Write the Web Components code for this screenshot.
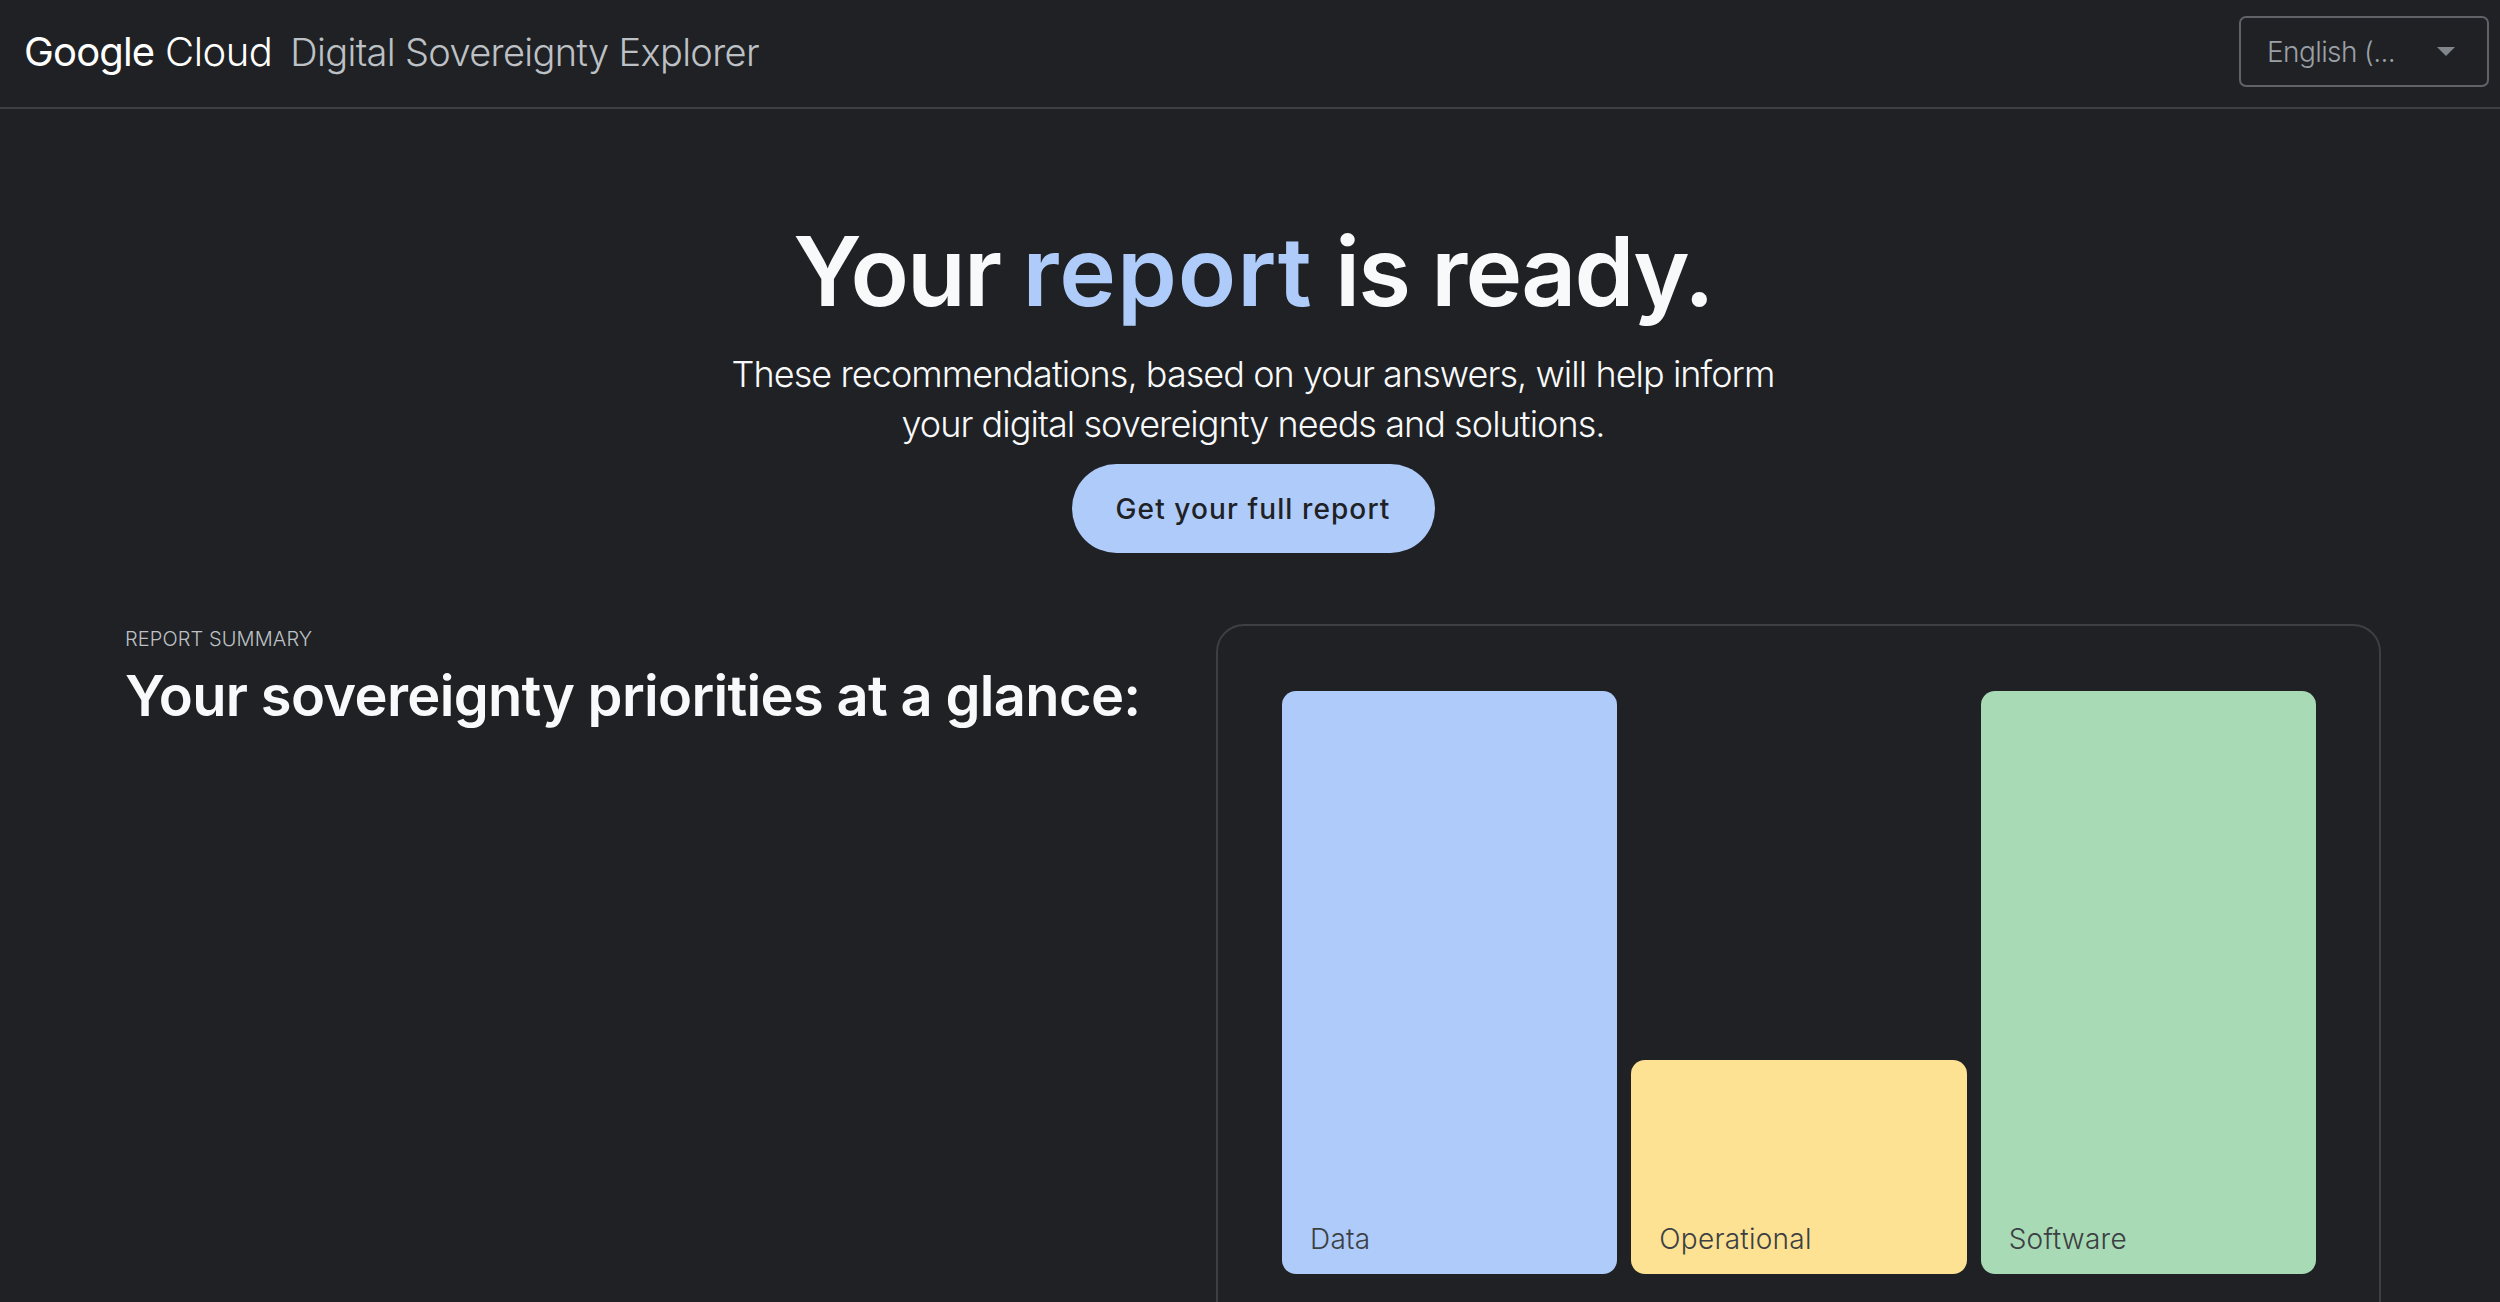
<!DOCTYPE html>
<html lang="en">
<head>
<meta charset="UTF-8">
<title>Digital Sovereignty Explorer</title>
<style>
	html, body { margin: 0; background: #202124; }
	body { font-family: "Inter", "Liberation Sans", sans-serif; color: #f8f9fa; height: 1302px; overflow: hidden; }
</style>
</head>
<body>
<ds-header></ds-header>
<ds-hero>
	<span slot="before">Your </span><span slot="accent">report</span><span slot="after"> is ready.</span>
	<span slot="lead">These recommendations, based on your answers, will help inform<br>your digital sovereignty needs and solutions.</span>
	<ds-button slot="action">Get your full report</ds-button>
</ds-hero>
<ds-summary>
	<span slot="eyebrow">REPORT SUMMARY</span>
	<span slot="title">Your sovereignty priorities at a glance:</span>
	<ds-chart slot="chart">
		<ds-bar style="--level: 100%; --fill: #aecbfa">Data</ds-bar>
		<ds-bar style="--level: 36.7%; --fill: #fde293">Operational</ds-bar>
		<ds-bar style="--level: 100%; --fill: #a8dab5">Software</ds-bar>
	</ds-chart>
</ds-summary>
<script>
	const define = (name, markup) => customElements.define(name, class extends HTMLElement {
		constructor() {
			super();
			this.attachShadow({ mode: "open" }).innerHTML = markup;
		}
	});

	define("ds-select", `<style>
		:host { display: flex; align-items: center; box-sizing: border-box; width: 250px; height: 71px; padding: 0 32px 0 26px; border: 2px solid #5f6368; border-radius: 7px; color: #9aa0a6; font-size: 28px; font-weight: 350; letter-spacing: -.6px; }
		span { flex: 1; }
		svg { display: block; }
	</style><span><slot></slot></span><svg width="18" height="9" viewBox="0 0 18 9"><path d="M0 0h18L9 9z" fill="#80868b"/></svg>`);

	define("ds-header", `<style>
		:host { display: flex; align-items: center; box-sizing: border-box; height: 109px; padding: 0 11px 4px 24px; border-bottom: 2px solid #3c4043; }
		.logo { color: #fff; font-size: 40px; letter-spacing: -.5px; white-space: nowrap; font-weight: 300; }
		.logo b { font-weight: 420; letter-spacing: -.85px; }
		.name { margin-left: 18px; flex: 1; color: #bdc1c6; font-size: 38px; font-weight: 350; letter-spacing: -.66px; white-space: nowrap; }
	</style><span class="logo"><b>Google</b> Cloud</span><span class="name">Digital Sovereignty Explorer</span><ds-select>English (...</ds-select>`);

	define("ds-button", `<style>
		:host { display: inline-flex; align-items: center; justify-content: center; box-sizing: border-box; width: 363px; height: 89px; border-radius: 45px; background: #aecbfa; color: #202124; font-size: 28px; font-weight: 500; letter-spacing: 1.1px; }
	</style><slot></slot>`);

	define("ds-hero", `<style>
		:host { display: flex; flex-direction: column; align-items: center; padding: 106px 0 0 6px; text-align: center; }
		h1 { margin: 0; font-size: 96px; line-height: 112px; font-weight: 600; letter-spacing: -1.9px; color: #f8f9fa; }
		.accent { color: #aecbfa; letter-spacing: .9px; }
		p { margin: 22px 0 0; font-size: 36px; line-height: 50px; font-weight: 350; letter-spacing: -.95px; }
		.action { margin-top: 15px; }
	</style>
	<h1><slot name="before"></slot><span class="accent"><slot name="accent"></slot></span><slot name="after"></slot></h1>
	<p><slot name="lead"></slot></p>
	<div class="action"><slot name="action"></slot></div>`);

	define("ds-summary", `<style>
		:host { display: grid; grid-template-columns: 1092px 1164px; margin-top: 71px; padding-left: 125px; }
		.eyebrow { margin-top: 3px; font-size: 20px; line-height: 24px; font-weight: 350; letter-spacing: .1px; color: #bdc1c6; }
		h2 { margin: 11px 0 0; font-size: 56px; line-height: 68px; font-weight: 600; letter-spacing: -.67px; white-space: nowrap; }
	</style>
	<div>
		<div class="eyebrow"><slot name="eyebrow"></slot></div>
		<h2><slot name="title"></slot></h2>
	</div>
	<slot name="chart"></slot>`);

	define("ds-chart", `<style>
		:host { display: flex; align-items: flex-end; gap: 14px; box-sizing: border-box; height: 717px; padding: 65px 63px 65px 64px; border: 2px solid #3c4043; border-radius: 28px; margin-left: -1px; }
	</style><slot></slot>`);

	define("ds-bar", `<style>
		:host { display: flex; align-items: flex-end; box-sizing: border-box; flex: 1; height: var(--level); padding: 0 28px 15px; border-radius: 14px; background: var(--fill); color: #3c4043; font-size: 28px; line-height: 40px; font-weight: 350; letter-spacing: .25px; }
	</style><slot></slot>`);
</script>
</body>
</html>
